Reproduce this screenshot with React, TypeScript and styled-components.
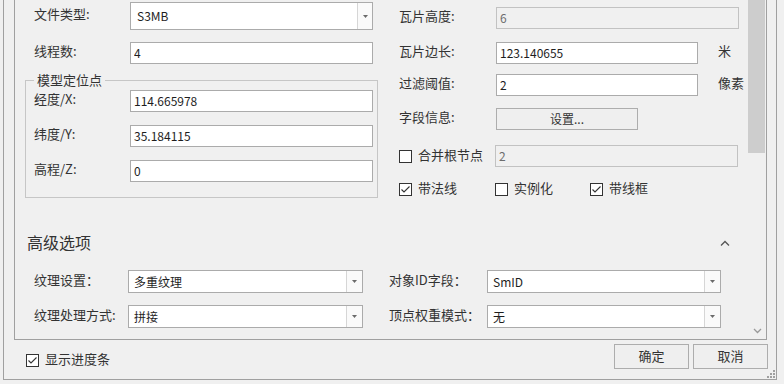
import styled, { createGlobalStyle } from "styled-components";

const FONT = `"Noto Sans CJK SC", "Microsoft YaHei", sans-serif`;

const GlobalStyle = createGlobalStyle`
  html, body {
    margin: 0;
    padding: 0;
    background: #f0f0f0;
  }
  * {
    box-sizing: border-box;
  }
  body {
    font-family: ${FONT};
    color: #333;
  }
`;

const Page = styled.div`
  width: 784px;
  height: 384px;
  padding-left: 3px;
  background: #f0f0f0;
  overflow: hidden;
`;

const Dialog = styled.div`
  position: relative;
  width: 774px;
  height: 380px;
  border: 1px solid #a0a0a0;
  border-top: none;
  display: flex;
  flex-direction: column;
`;

const ScrollPane = styled.div`
  display: flex;
  height: 340px;
  margin: 0 9px 0 10px;
  border: 1px solid #a0a0a0;
  border-top: none;
  overflow: hidden;
`;

const Content = styled.div`
  flex: 1;
  display: flex;
  flex-direction: column;
`;

const ScrollTrack = styled.div`
  width: 18px;
  display: flex;
  flex-direction: column;
  background: #f0f0f0;
`;

const ScrollThumb = styled.div`
  height: 153px;
  margin-right: 1px;
  background: #cdcdcd;
`;

const ScrollArrow = styled.div`
  margin-top: auto;
  height: 17px;
  display: flex;
  align-items: center;
  justify-content: center;
`;

const TopSection = styled.div`
  display: flex;
`;

const LeftCol = styled.div`
  width: 370px;
  padding-top: 2px;
  display: flex;
  flex-direction: column;
`;

const RightCol = styled.div`
  flex: 1;
  padding-left: 14px;
  display: flex;
  flex-direction: column;
`;

const Row = styled.div<{ $top?: number; $indent?: number }>`
  display: flex;
  align-items: center;
  margin-top: ${(p) => p.$top ?? 0}px;
  padding-left: ${(p) => p.$indent ?? 0}px;
`;

const Label = styled.span<{ $w: number; $gap?: number }>`
  width: ${(p) => p.$w}px;
  margin-left: ${(p) => p.$gap ?? 0}px;
  padding-bottom: 4px;
  flex-shrink: 0;
  font-size: 13px;
  line-height: 18px;
  color: #333;
  white-space: nowrap;
`;

const Unit = styled.span`
  margin-left: 20px;
  padding-bottom: 4px;
  font-size: 13px;
  line-height: 18px;
  color: #333;
`;

const TextBox = styled.input<{ $w: number }>`
  width: ${(p) => p.$w}px;
  height: 22px;
  margin: 0;
  padding: 0 0 1px 3px;
  border: 1px solid ${(p) => (p.disabled ? "#c2c2c2" : "#ababab")};
  background: ${(p) => (p.disabled ? "#f0f0f0" : "#fff")};
  color: ${(p) => (p.disabled ? "#6d6d6d" : "#1e1e1e")};
  font: 12px ${FONT};
  outline: none;
`;

const Combo = styled.div<{ $w: number; $h: number }>`
  display: flex;
  width: ${(p) => p.$w}px;
  height: ${(p) => p.$h}px;
  border: 1px solid #ababab;
  background: #fff;
`;

const ComboText = styled.span<{ $pad: number }>`
  flex: 1;
  display: flex;
  align-items: center;
  padding-left: ${(p) => p.$pad}px;
  padding-bottom: 1px;
  font-size: 12px;
  color: #1e1e1e;
`;

const ComboButton = styled.span<{ $w: number }>`
  width: ${(p) => p.$w}px;
  display: flex;
  align-items: center;
  justify-content: center;
  border-left: 1px solid #d6d6d6;
  background: #fafafa;
`;

const Group = styled.fieldset`
  width: 353px;
  margin: 8px 0 0 10px;
  padding: 2px 4px 15px 8px;
  border: 1px solid #c6c6c6;
  min-inline-size: auto;
`;

const Legend = styled.legend`
  padding: 0 3px;
  font-size: 13px;
  line-height: 16px;
  color: #333;
`;

const GroupRows = styled.div`
  display: flex;
  flex-direction: column;
  gap: 13px;
`;

const PushButton = styled.button<{ $w: number; $h: number; $size: number }>`
  width: ${(p) => p.$w}px;
  height: ${(p) => p.$h}px;
  margin: 0;
  padding: 0 0 2px;
  border: 1px solid #adadad;
  background: #efefef;
  color: #333;
  font: ${(p) => p.$size}px ${FONT};
`;

const CheckItem = styled.label<{ $w?: number }>`
  display: flex;
  align-items: center;
  gap: 6px;
  width: ${(p) => (p.$w ? `${p.$w}px` : "auto")};
  flex-shrink: 0;
  font-size: 13px;
  line-height: 18px;
  color: #333;
  white-space: nowrap;
`;

const CheckText = styled.span`
  padding-bottom: 2px;
`;

const Box = styled.span`
  width: 13px;
  height: 13px;
  border: 1px solid #333;
  background: #fff;
  display: flex;
  align-items: center;
  justify-content: center;
`;

const AdvancedHeader = styled.div`
  display: flex;
  align-items: center;
  justify-content: space-between;
  height: 22px;
  margin-top: 33px;
  padding: 0 18px 0 12px;
  font-size: 16px;
  color: #333;
`;

const HeaderText = styled.span`
  padding-bottom: 2px;
`;

const BottomBar = styled.div`
  flex: 1;
  display: flex;
  align-items: flex-start;
  padding: 4px 8px 0 22px;
`;

const BottomButtons = styled.div`
  margin-left: auto;
  display: flex;
  gap: 4px;
`;

const Grip = styled.svg`
  position: absolute;
  right: 0;
  bottom: 0;
`;

const Arrow = () => (
  <svg width="5" height="3" viewBox="0 0 5 3">
    <polygon points="0,0 5,0 2.5,3" fill="#6b6b6b" />
  </svg>
);

const Check = ({ checked }: { checked?: boolean }) => (
  <Box>
    {checked && (
      <svg width="11" height="11" viewBox="0 0 11 11">
        <polyline points="1.5,5.5 4,8 9.5,2.5" fill="none" stroke="#333" strokeWidth="1.1" />
      </svg>
    )}
  </Box>
);

const DropDown = ({ w, h, btn, pad, text }: { w: number; h: number; btn: number; pad: number; text: string }) => (
  <Combo $w={w} $h={h}>
    <ComboText $pad={pad}>{text}</ComboText>
    <ComboButton $w={btn}>
      <Arrow />
    </ComboButton>
  </Combo>
);

export default function App() {
  return (
    <Page>
      <GlobalStyle />
      <Dialog>
        <ScrollPane>
          <Content>
            <TopSection>
              <LeftCol>
                <Row $indent={19}>
                  <Label $w={96}>文件类型:</Label>
                  <DropDown w={243} h={28} btn={15} pad={6} text="S3MB" />
                </Row>
                <Row $indent={19} $top={12}>
                  <Label $w={96}>线程数:</Label>
                  <TextBox $w={243} value="4" readOnly />
                </Row>
                <Group>
                  <Legend>模型定位点</Legend>
                  <GroupRows>
                    <Row>
                      <Label $w={96}>经度/X:</Label>
                      <TextBox $w={243} value="114.665978" readOnly />
                    </Row>
                    <Row>
                      <Label $w={96}>纬度/Y:</Label>
                      <TextBox $w={243} value="35.184115" readOnly />
                    </Row>
                    <Row>
                      <Label $w={96}>高程/Z:</Label>
                      <TextBox $w={243} value="0" readOnly />
                    </Row>
                  </GroupRows>
                </Group>
              </LeftCol>

              <RightCol>
                <Row $top={7}>
                  <Label $w={97}>瓦片高度:</Label>
                  <TextBox $w={243} value="6" disabled readOnly />
                </Row>
                <Row $top={13}>
                  <Label $w={97}>瓦片边长:</Label>
                  <TextBox $w={202} value="123.140655" readOnly />
                  <Unit>米</Unit>
                </Row>
                <Row $top={10}>
                  <Label $w={97}>过滤阈值:</Label>
                  <TextBox $w={202} value="2" readOnly />
                  <Unit>像素</Unit>
                </Row>
                <Row $top={12}>
                  <Label $w={97}>字段信息:</Label>
                  <PushButton $w={142} $h={22} $size={12}>设置...</PushButton>
                </Row>
                <Row $top={15}>
                  <CheckItem $w={96}>
                    <Check />
                    <CheckText>合并根节点</CheckText>
                  </CheckItem>
                  <TextBox $w={243} value="2" disabled readOnly />
                </Row>
                <Row $top={12}>
                  <CheckItem $w={96}>
                    <Check checked />
                    <CheckText>带法线</CheckText>
                  </CheckItem>
                  <CheckItem $w={95}>
                    <Check />
                    <CheckText>实例化</CheckText>
                  </CheckItem>
                  <CheckItem>
                    <Check checked />
                    <CheckText>带线框</CheckText>
                  </CheckItem>
                </Row>
              </RightCol>
            </TopSection>

            <AdvancedHeader>
              <HeaderText>高级选项</HeaderText>
              <svg width="10" height="6" viewBox="0 0 10 6">
                <polyline points="1,5.5 5,1.5 9,5.5" fill="none" stroke="#555" strokeWidth="1.3" />
              </svg>
            </AdvancedHeader>
            <Row $indent={19} $top={16}>
              <Label $w={94}>纹理设置：</Label>
              <DropDown w={235} h={23} btn={16} pad={5} text="多重纹理" />
              <Label $w={98} $gap={26}>对象ID字段：</Label>
              <DropDown w={234} h={23} btn={16} pad={5} text="SmID" />
            </Row>
            <Row $indent={19} $top={12}>
              <Label $w={94}>纹理处理方式:</Label>
              <DropDown w={235} h={23} btn={16} pad={5} text="拼接" />
              <Label $w={98} $gap={26}>顶点权重模式：</Label>
              <DropDown w={234} h={23} btn={16} pad={5} text="无" />
            </Row>
          </Content>

          <ScrollTrack>
            <ScrollThumb />
            <ScrollArrow>
              <svg width="9" height="6" viewBox="0 0 9 6">
                <polyline points="1,1 4.5,4.5 8,1" fill="none" stroke="#9a9a9a" strokeWidth="1.3" />
              </svg>
            </ScrollArrow>
          </ScrollTrack>
        </ScrollPane>

        <BottomBar>
          <CheckItem style={{ marginTop: 6 }}>
            <Check checked />
            <CheckText>显示进度条</CheckText>
          </CheckItem>
          <BottomButtons>
            <PushButton $w={75} $h={25} $size={13}>确定</PushButton>
            <PushButton $w={75} $h={25} $size={13}>取消</PushButton>
          </BottomButtons>
        </BottomBar>

        <Grip width="9" height="9" viewBox="0 0 9 9">
          <rect x="6" y="0" width="2" height="2" fill="#a0a0a0" />
          <rect x="3" y="3" width="2" height="2" fill="#a0a0a0" />
          <rect x="6" y="3" width="2" height="2" fill="#a0a0a0" />
          <rect x="0" y="6" width="2" height="2" fill="#a0a0a0" />
          <rect x="3" y="6" width="2" height="2" fill="#a0a0a0" />
          <rect x="6" y="6" width="2" height="2" fill="#a0a0a0" />
        </Grip>
      </Dialog>
    </Page>
  );
}
